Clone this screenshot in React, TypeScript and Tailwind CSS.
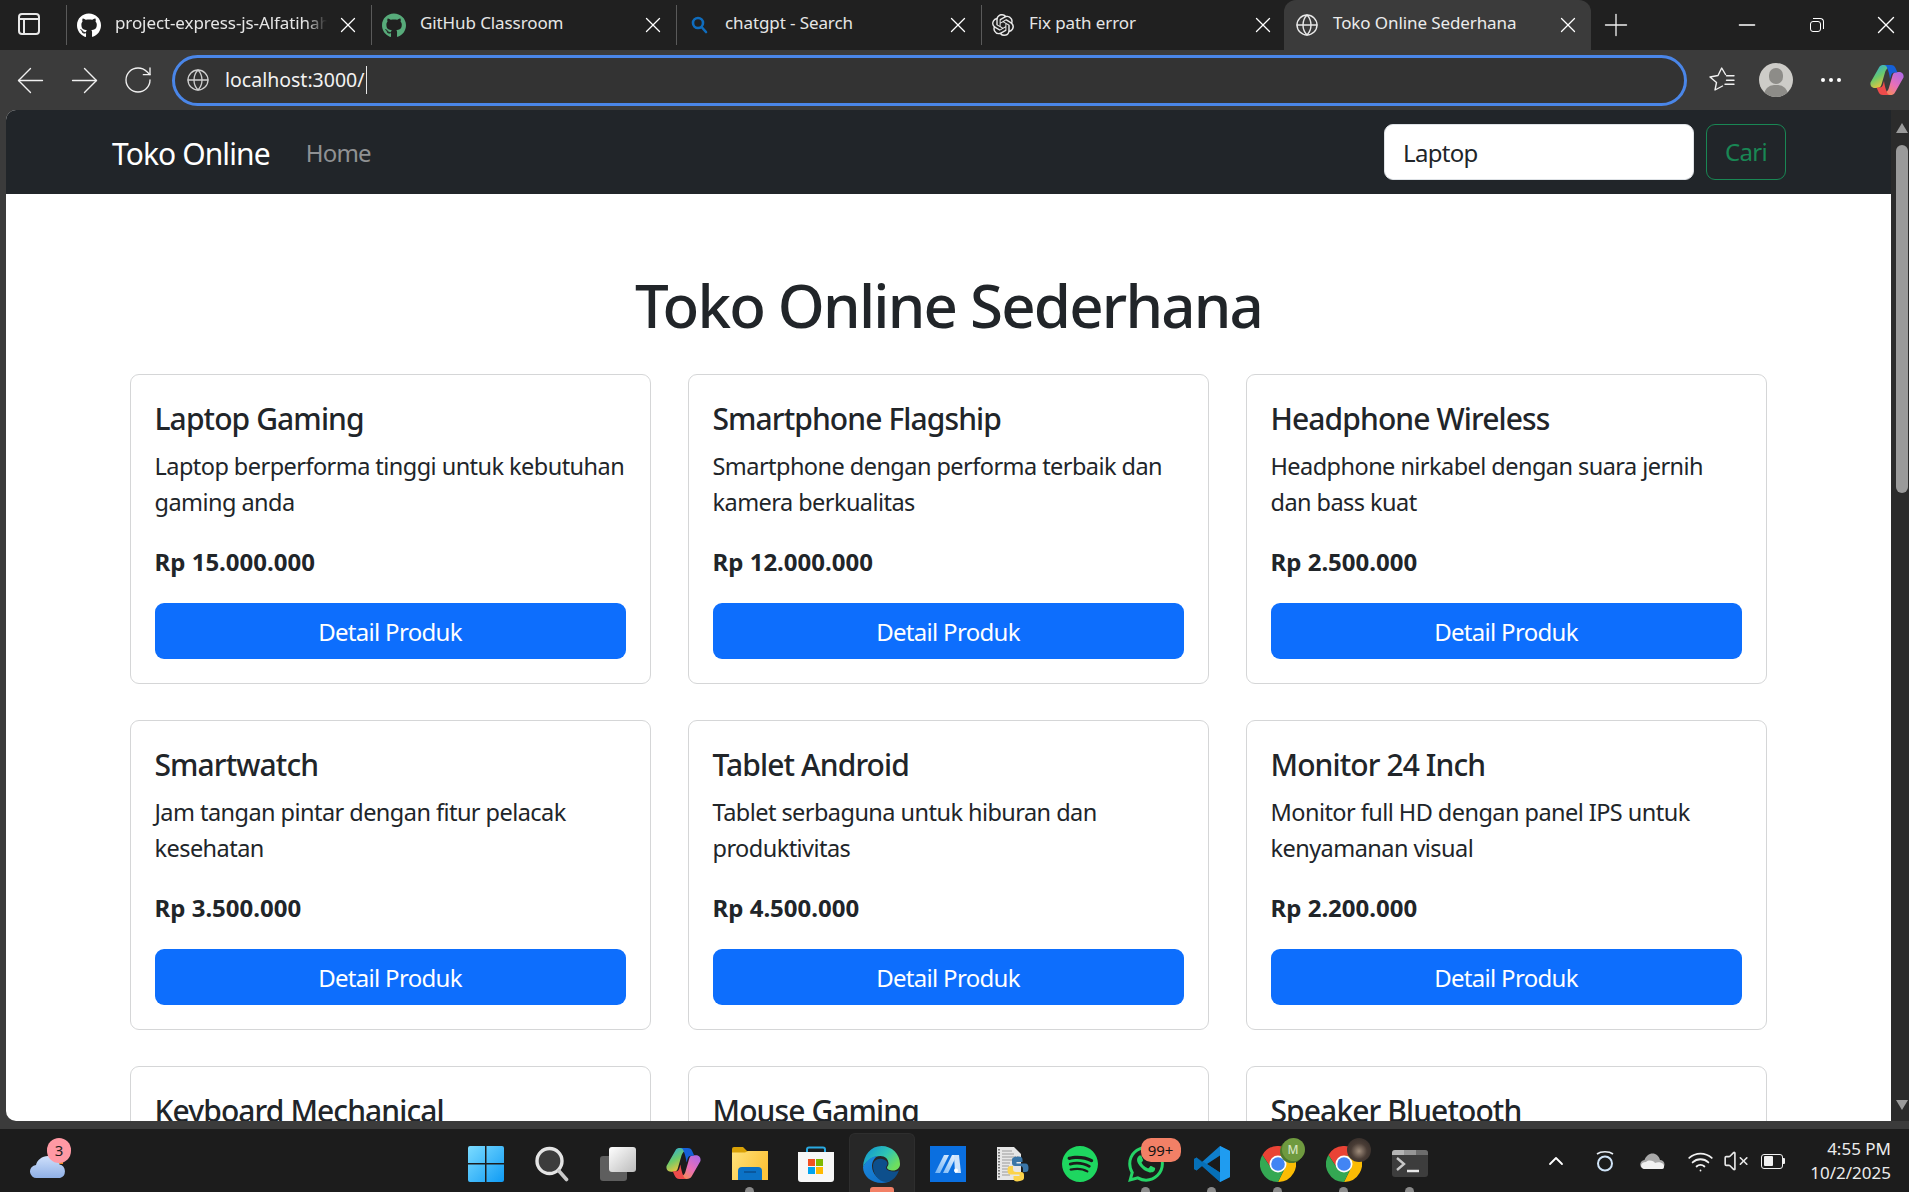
import { ArrowLeft, ArrowRight, ChevronUp, Globe, Minus, Plus, RotateCw, VolumeX, Wifi, X } from 'lucide-react';
import { FaGithub } from 'react-icons/fa';
import { SiOpenai, SiSpotify, SiWhatsapp } from 'react-icons/si';

const products = [
  { name: 'Laptop Gaming', desc: 'Laptop berperforma tinggi untuk kebutuhan gaming anda', price: 'Rp 15.000.000' },
  { name: 'Smartphone Flagship', desc: 'Smartphone dengan performa terbaik dan kamera berkualitas', price: 'Rp 12.000.000' },
  { name: 'Headphone Wireless', desc: 'Headphone nirkabel dengan suara jernih dan bass kuat', price: 'Rp 2.500.000' },
  { name: 'Smartwatch', desc: 'Jam tangan pintar dengan fitur pelacak kesehatan', price: 'Rp 3.500.000' },
  { name: 'Tablet Android', desc: 'Tablet serbaguna untuk hiburan dan produktivitas', price: 'Rp 4.500.000' },
  { name: 'Monitor 24 Inch', desc: 'Monitor full HD dengan panel IPS untuk kenyamanan visual', price: 'Rp 2.200.000' },
  { name: 'Keyboard Mechanical' },
  { name: 'Mouse Gaming' },
  { name: 'Speaker Bluetooth' },
];

function SearchTabIcon() {
  return (
    <svg width="24" height="24" viewBox="0 0 24 24" fill="none" stroke="#0f6cbd" strokeWidth="2.6" strokeLinecap="round">
      <circle cx="11" cy="10" r="5" />
      <path d="M15 14.5l4 4.5" />
    </svg>
  );
}

function TabClose() {
  return <X size={26} strokeWidth={1.2} className="shrink-0 text-white" />;
}

function Tab({ icon, title, fade }: { icon: React.ReactNode; title: string; fade?: boolean }) {
  return (
    <div className="flex h-[40px] w-[305px] shrink-0 items-center border-l border-[#5a5a5a] pl-[10px] pr-[10px]">
      <span className="flex w-[24px] shrink-0 items-center justify-center">{icon}</span>
      <span className={`mb-[4px] ml-[14px] flex-1 overflow-hidden whitespace-nowrap text-[17px] tracking-[-0.1px] text-[#e6e6e6] ${fade ? 'mr-[8px] [mask-image:linear-gradient(90deg,#000_90%,transparent_100%)]' : ''}`}>
        {title}
      </span>
      <TabClose />
    </div>
  );
}

function TabStrip() {
  return (
    <div className="flex h-[50px] shrink-0 items-center bg-[#202020]">
      <div className="flex w-[66px] shrink-0 justify-center pb-[2px] pr-[8px]">
        <div className="flex h-[22px] w-[22px] rounded-[4px] border-2 border-[#e8e8e8]">
          <div className="mt-[3px] w-[5px] border-r-2 border-t-2 border-[#e8e8e8]" />
          <div className="mt-[3px] flex-1 border-t-2 border-[#e8e8e8]" />
        </div>
      </div>
      <Tab icon={<FaGithub size={25} className="text-white" />} title="project-express-js-Alfatihah-Ramadhan" fade />
      <Tab icon={<FaGithub size={25} className="text-[#57ab7a]" />} title="GitHub Classroom" />
      <Tab icon={<SearchTabIcon />} title="chatgpt - Search" />
      <div className="flex h-[40px] w-[303px] shrink-0 items-center border-l border-[#5a5a5a] pl-[10px] pr-[8px]">
        <SiOpenai size={22} className="text-[#e8e8e8]" />
        <span className="mb-[4px] ml-[15px] flex-1 text-[17px] tracking-[-0.1px] text-[#e6e6e6]">Fix path error</span>
        <TabClose />
      </div>
      <div className="flex h-[50px] w-[307px] shrink-0 items-center rounded-t-[12px] bg-[#3b3b3b] pl-[11px] pr-[10px]">
        <Globe size={24} strokeWidth={1.4} className="text-[#e8e8e8]" />
        <span className="mb-[4px] ml-[14px] flex-1 text-[17px] tracking-[-0.1px] text-[#ececec]">Toko Online Sederhana</span>
        <TabClose />
      </div>
      <Plus size={36} strokeWidth={0.9} className="ml-[7px] text-[#eeeeee]" />
      <div className="ml-auto flex items-center">
        <div className="flex w-[70px] justify-center"><Minus size={26} strokeWidth={1.3} className="text-white" /></div>
        <div className="flex w-[70px] justify-center">
          <div className="relative h-[14px] w-[14px]">
            <div className="absolute bottom-0 left-0 h-[11px] w-[11px] rounded-[3px] border-[1.5px] border-white" />
            <div className="absolute right-0 top-0 h-[11px] w-[11px] rounded-tr-[4px] border-r-[1.5px] border-t-[1.5px] border-white" />
          </div>
        </div>
        <div className="flex w-[57px] justify-end pr-[8px]"><X size={30} strokeWidth={1.1} className="text-white" /></div>
      </div>
    </div>
  );
}

function FavoritesIcon() {
  return (
    <svg width="26" height="26" viewBox="0 0 26 26" fill="none" stroke="#f0f0f0" strokeWidth="1.4" strokeLinejoin="round" strokeLinecap="round">
      <path d="M16.500 7.500L12.700 1 9 8.500 1 10l6.500 5.500L6 23l7.500-4" />
      <path d="M17.500 8.700H25M17.500 13.300H25M16 17.300H25" />
    </svg>
  );
}

function Copilot({ size }: { size: number }) {
  return (
    <svg width={size} height={size} viewBox="0 0 34 34">
      <defs>
        <linearGradient id="copA" x1="0" y1="0" x2="0.5" y2="1">
          <stop offset="0" stopColor="#22a7ee" />
          <stop offset="0.55" stopColor="#6cc96a" />
          <stop offset="1" stopColor="#f5c33b" />
        </linearGradient>
        <linearGradient id="copB" x1="1" y1="0" x2="0.3" y2="1">
          <stop offset="0" stopColor="#a868ea" />
          <stop offset="0.6" stopColor="#e86fb8" />
          <stop offset="1" stopColor="#f58a5c" />
        </linearGradient>
      </defs>
      <path d="M9 4.500C10 2.500 11.500 2 14 2h7l-3 3c-1.500 1-2.500 2.500-3 4.500l-3.500 12c-.7 2.500-2 3.500-4.500 3.500H5c-3.500 0-5-2.500-4.500-5.500z" fill="url(#copA)" />
      <path d="M25 29.500c-1 2-2.500 2.500-5 2.500h-7l3-3c1.500-1 2.500-2.500 3-4.500l3.500-12c.7-2.500 2-3.500 4.500-3.500H29c3.500 0 5 2.500 4.500 5.500z" fill="url(#copB)" />
      <path d="M14 2h7c2.500 0 3.600 1 4.500 3l2 4.500h-3c-2 0-3 1-3.500 3l-1 3.500c-.5-4-1.500-8-3-11.500C16.500 3 15.500 2.300 14 2z" fill="#1560d8" />
      <path d="M20 32h-7c-2.500 0-3.600-1-4.500-3l-2-4.500h3c2 0 3-1 3.500-3l1-3.500c.5 4 1.500 8 3 11.500C17.500 31 18.500 31.700 20 32z" fill="#ee4b4b" />
    </svg>
  );
}

function AddressBar() {
  return (
    <div className="flex h-[60px] shrink-0 items-center bg-[#3b3b3b]">
      <div className="flex w-[172px] shrink-0 items-center pl-[3px]">
        <div className="flex w-[54px] justify-center"><ArrowLeft size={41} strokeWidth={0.8} className="shrink-0 text-[#f0f0f0]" /></div>
        <div className="flex w-[54px] justify-center"><ArrowRight size={41} strokeWidth={0.8} className="shrink-0 text-[#f0f0f0]" /></div>
        <div className="flex w-[54px] justify-center"><RotateCw size={32} strokeWidth={1} className="shrink-0 text-[#f0f0f0]" /></div>
      </div>
      <div className="flex h-[51px] w-[1515px] shrink-0 items-center rounded-full border-[3px] border-[#4a86e8] bg-[#333333] pl-[11px]">
        <Globe size={24} strokeWidth={1.3} className="text-[#cfcfcf]" />
        <span className="ml-[15px] text-[19.5px] text-[#f2f2f2]">localhost:3000/</span>
        <span className="ml-[2px] h-[28px] w-px bg-[#e8e8e8]" />
      </div>
      <div className="ml-[22px] flex items-center">
        <FavoritesIcon />
        <div className="relative ml-[24px] h-[34px] w-[34px] overflow-hidden rounded-full bg-[#cdccc8]">
          <div className="absolute left-[10px] top-[5px] h-[16px] w-[14px] rounded-full bg-[#8d8c88]" />
          <div className="absolute left-[5px] top-[22px] h-[20px] w-[24px] rounded-full bg-[#8d8c88]" />
        </div>
        <div className="ml-[28px] flex gap-[4px]">
          <span className="h-[4px] w-[4px] rounded-full bg-white" />
          <span className="h-[4px] w-[4px] rounded-full bg-white" />
          <span className="h-[4px] w-[4px] rounded-full bg-white" />
        </div>
        <div className="ml-[29px]"><Copilot size={34} /></div>
      </div>
    </div>
  );
}

function ProductCard({ name, desc, price }: { name: string; desc?: string; price?: string }) {
  return (
    <div className="h-[310px] rounded-[9px] border-[1.5px] border-[#d5d6d7] pl-[23.5px] pr-[24.5px] pt-[25.5px]">
      <h5 className="mb-[11px] text-[30px] font-medium leading-[36px] tracking-[-0.9px]">{name}</h5>
      {desc && <p className="mb-[24px] text-[23.5px] leading-[36px] tracking-[-0.55px]">{desc}</p>}
      {price && <p className="mb-[23px] text-[24px] font-bold leading-[36px]">{price}</p>}
      {price && <button className="h-[56px] w-full rounded-[9px] bg-[#0d6efd] pt-[2px] text-[24px] tracking-[-0.7px] text-white">Detail Produk</button>}
    </div>
  );
}

function Page() {
  return (
    <div className="flex min-h-0 flex-1 bg-[#3b3b3b] pl-[6px]">
      <div className="min-w-0 flex-1 overflow-hidden rounded-l-[10px] bg-white text-[#212529]">
        <nav className="flex h-[84px] items-center bg-[#212529] pl-[106px] pr-[105px]">
          <span className="mt-[2px] text-[30px] tracking-[-0.9px] text-white">Toko Online</span>
          <span className="ml-[36px] mt-[2px] text-[24px] tracking-[-0.8px] text-[#8f9193]">Home</span>
          <input
            readOnly
            value="Laptop"
            className="ml-auto h-[56px] w-[310px] rounded-[9px] border-[1.5px] border-[#dee2e6] bg-white px-[18px] text-[24px] tracking-[-0.7px] text-[#212529] outline-none"
          />
          <button className="ml-[12px] h-[56px] w-[80px] rounded-[9px] border-[1.5px] border-[#198754] text-[24px] tracking-[-0.7px] text-[#198754]">Cari</button>
        </nav>
        <div className="px-[124px] pt-[75px]">
          <h1 className="mb-[33px] text-center text-[60px] font-medium leading-[72px] tracking-[-1.8px]">Toko Online Sederhana</h1>
          <div className="grid grid-cols-3 gap-x-[37px] gap-y-[36px]">
            {products.map((p) => (
              <ProductCard key={p.name} {...p} />
            ))}
          </div>
        </div>
      </div>
      <div className="flex w-[18px] shrink-0 flex-col items-center bg-[#2b2b2b] pl-[3px] pt-[13px]">
        <div className="h-0 w-0 border-x-[6px] border-b-[10px] border-x-transparent border-b-[#9a9a9a]" />
        <div className="mt-[12px] h-[348px] w-[12px] rounded-full bg-[#9a9a9a]" />
        <div className="mb-[11px] mt-auto h-0 w-0 border-x-[6px] border-t-[10px] border-x-transparent border-t-[#9a9a9a]" />
      </div>
    </div>
  );
}

function WindowsLogo() {
  return (
    <svg width="36" height="36" viewBox="0 0 36 36">
      <defs>
        <linearGradient id="win" x1="0" y1="0" x2="1" y2="1">
          <stop offset="0" stopColor="#7cdcff" />
          <stop offset="1" stopColor="#0f9bf5" />
        </linearGradient>
      </defs>
      <path d="M0 2a2 2 0 0 1 2-2h15v17H0zM18.500 0H34a2 2 0 0 1 2 2v15H18.500zM0 18.500h17V36H2a2 2 0 0 1-2-2zM18.500 18.500H36V34a2 2 0 0 1-2 2H18.500z" fill="url(#win)" />
    </svg>
  );
}

function SearchLogo() {
  return (
    <svg width="34" height="36" viewBox="0 0 34 36" fill="none">
      <circle cx="14.500" cy="15" r="12.500" fill="#3c3c3c" stroke="#e4e4e4" strokeWidth="3.400" />
      <path d="M24 25l7.500 8.500" stroke="#c9c9c9" strokeWidth="3.600" strokeLinecap="round" />
    </svg>
  );
}

function TaskView() {
  return (
    <div className="relative h-[34px] w-[36px]">
      <div className="absolute bottom-0 left-0 h-[25px] w-[27px] rounded-[3px] bg-[#5e5e5e]" />
      <div className="absolute right-0 top-0 h-[25px] w-[27px] rounded-[3px] bg-gradient-to-br from-white to-[#bcbcbc]" />
    </div>
  );
}

function FolderLogo() {
  return (
    <svg width="36" height="33" viewBox="0 0 36 33">
      <defs>
        <linearGradient id="folder" x1="0" y1="0" x2="1" y2="0.4">
          <stop offset="0" stopColor="#ffe27a" />
          <stop offset="1" stopColor="#fcc43c" />
        </linearGradient>
      </defs>
      <path d="M0 2a2 2 0 0 1 2-2h9l4 4h19a2 2 0 0 1 2 2v4H0z" fill="#d9a106" />
      <path d="M0 5.500h13l3-1.500h20V33H0z" fill="url(#folder)" />
      <path d="M6 33v-9a4 4 0 0 1 4-4h16a4 4 0 0 1 4 4v9z" fill="#0b72c6" />
      <path d="M12 25h12" stroke="#0a4f8f" strokeWidth="1.500" />
    </svg>
  );
}

function StoreLogo() {
  return (
    <svg width="36" height="36" viewBox="0 0 36 36">
      <path d="M9 8V3.500a2 2 0 0 1 2-2h14a2 2 0 0 1 2 2V8" fill="none" stroke="#29a9e1" strokeWidth="2" />
      <path d="M0 6h36v27a3 3 0 0 1-3 3H3a3 3 0 0 1-3-3z" fill="#f7f7f7" />
      <rect x="10" y="13" width="7" height="7" fill="#f25022" />
      <rect x="18" y="13" width="7" height="7" fill="#7fba00" />
      <rect x="10" y="21" width="7" height="7" fill="#00a4ef" />
      <rect x="18" y="21" width="7" height="7" fill="#ffb900" />
    </svg>
  );
}

function EdgeLogo() {
  return (
    <svg width="37" height="37" viewBox="0 0 37 37">
      <defs>
        <linearGradient id="edgeTop" x1="0" y1="0" x2="1" y2="0.6">
          <stop offset="0" stopColor="#0c8fd6" />
          <stop offset="0.6" stopColor="#2fc5b4" />
          <stop offset="1" stopColor="#6ede5e" />
        </linearGradient>
        <linearGradient id="edgeLow" x1="0" y1="0" x2="1" y2="1">
          <stop offset="0" stopColor="#1b8ae0" />
          <stop offset="1" stopColor="#0f6ac0" />
        </linearGradient>
      </defs>
      <path d="M18.500 0C29 0 37 8 37 18c0 4-3 6.500-7 6.500-3 0-6-1-6-3 0-1 1.500-1.500 1.500-4C25.500 13 22 10 17.500 10 10 10 4 14 0 21 .5 9 8 0 18.500 0z" fill="url(#edgeTop)" />
      <path d="M0 21c3-6 8-11 15-11-4 2-6 6-6 10 0 8 7 15 15 15 2 0 3.500 0 5-1-3 2-6 3-10 3C8 37 0 30 0 21z" fill="url(#edgeLow)" />
      <path d="M10 20c0-5 4-8 9-7 3 .5 5.500 2.500 5.500 4.500 0 2-1.500 2.500-1.500 4 0 3 5 4 8 4 2 0 4-.5 5-1.500-1.500 5-6 12-13 12C15 36 10 27 10 20z" fill="#0d4f8c" />
    </svg>
  );
}

function MatLogo() {
  return (
    <svg width="36" height="36" viewBox="0 0 36 36">
      <defs>
        <linearGradient id="matBars" x1="0" y1="1" x2="1" y2="0">
          <stop offset="0" stopColor="#6fb2f5" />
          <stop offset="1" stopColor="#eef6ff" />
        </linearGradient>
      </defs>
      <rect width="36" height="36" fill="#0a6fe0" />
      <path d="M5 27L14 9h5L10 27zM13 27L22 9h5L18 27z" fill="url(#matBars)" />
      <path d="M24 9h5l2 18h-6z" fill="#cfe4fb" />
      <circle cx="26" cy="24.500" r="2" fill="#ffffff" />
    </svg>
  );
}

function PythonFile() {
  return (
    <svg width="35" height="36" viewBox="0 0 35 36">
      <path d="M1 1h17l7 7v26H1z" fill="#e6e6e6" />
      <path d="M3 3v30" stroke="#555555" strokeWidth="1.500" strokeDasharray="1.500 1.500" />
      <path d="M6 5h10M6 8h12M6 11h16M6 14h16M6 17h8M6 20h7M6 23h8M6 26h8M6 29h8" stroke="#9a9a9a" strokeWidth="1" />
      <path d="M20 11c4-1 6.500 0 6.500 2.500V16h-6v1.500h9c2 0 3 1.500 3 4.500s-1 4-3 4h-2.500v-3c0-2-1-3-3-3h-5c-2 0-3-1-3-3v-3.500c0-1.500 1.500-2.500 4-3z" fill="#3a76a8" />
      <path d="M24 35c-4 1-6.500 0-6.500-2.500V30h6v-1.500h-9c-2 0-3-1.500-3-4.500s1-4 3-4H17v3c0 2 1 3 3 3h5c2 0 3 1 3 3V32c0 1.500-1.500 2.500-4 3z" fill="#fcd34a" />
    </svg>
  );
}

function VsCodeLogo() {
  return (
    <svg width="36" height="36" viewBox="0 0 36 36">
      <path d="M26 0l10 5v26l-10 5L8 20 2.500 24.500 0 23v-10l2.500-1.500L8 16z" fill="#0f7ecb" />
      <path d="M26 0l10 5v26l-10 5z" fill="#1f9cf0" />
      <path d="M26 9.500L13 18l13 8.500z" fill="#1a1a1a" />
      <path d="M0 13l2.500-1.500L26 26.500V36L8 20 2.500 24.500 0 23z" fill="#0065a9" opacity="0.55" />
    </svg>
  );
}

function ChromeLogo() {
  const red = 'M33.600 9A18 18 0 0 0 2.400 9L11.100 22A8 8 0 0 1 18 10Z';
  return (
    <svg width="36" height="36" viewBox="0 0 36 36">
      <path d={red} fill="#ea4335" />
      <path d={red} fill="#fbbc04" transform="rotate(120 18 18)" />
      <path d={red} fill="#34a853" transform="rotate(240 18 18)" />
      <circle cx="18" cy="18" r="8.500" fill="#ffffff" />
      <circle cx="18" cy="18" r="6.800" fill="#4285f4" />
    </svg>
  );
}

function TerminalLogo() {
  return (
    <div className="h-[27px] w-[36px] overflow-hidden rounded-[3px] bg-[#3d3d3d]">
      <div className="flex h-[5px]">
        <div className="flex-1 bg-[#b5b5b5]" />
        <div className="flex-1 bg-[#969696]" />
        <div className="flex-1 bg-[#6d6d6d]" />
      </div>
      <svg width="36" height="22" viewBox="0 0 36 22" fill="none">
        <path d="M5 3l7 6-7 6" stroke="#c8c8c8" strokeWidth="2.400" />
        <path d="M15 16h12" stroke="#e8e8e8" strokeWidth="2.400" />
      </svg>
    </div>
  );
}

function TaskSlot({ children, running, active }: { children: React.ReactNode; running?: boolean; active?: boolean }) {
  return (
    <div className={`relative flex h-[59px] w-[66px] items-center justify-center pt-[2px] ${active ? 'rounded-t-[6px] border border-b-0 border-[#2e2e2e] bg-[#272727]' : ''}`}>
      {children}
      {running && <span className="absolute bottom-0 left-[28px] h-[5px] w-[9px] rounded-t-full bg-[#8a8a8a]" />}
      {active && <span className="absolute bottom-0 left-[20px] h-[5px] w-[24px] rounded-t-[3px] bg-[#f28066]" />}
    </div>
  );
}

function WeatherIcon() {
  return (
    <div className="relative h-[42px] w-[42px]">
      <span className="absolute left-[24px] top-[19px] h-[8px] w-[9px] bg-[#f08a24]" />
      <svg width="38" height="24" viewBox="0 0 38 24" className="absolute bottom-0 left-0">
        <defs>
          <linearGradient id="cloud" x1="0" y1="0" x2="0" y2="1">
            <stop offset="0" stopColor="#cfe0fb" />
            <stop offset="1" stopColor="#8fb0e6" />
          </linearGradient>
        </defs>
        <path d="M7 23a6.500 6.500 0 0 1-1-13C7 5 12 1 18 1s10 3 11.500 8.500A7 7 0 0 1 30 23z" fill="url(#cloud)" />
      </svg>
      <span className="absolute left-[17px] top-[1px] flex h-[25px] w-[24px] items-center justify-center rounded-full bg-[#ff99a4] text-[15px] text-[#1c1c1c]">3</span>
    </div>
  );
}

function BatteryIcon() {
  return (
    <div className="flex items-center">
      <div className="h-[15px] w-[22px] rounded-[3px] border-[1.5px] border-[#f0f0f0] p-[1.5px]">
        <div className="h-full w-[9px] rounded-[1px] bg-[#f0f0f0]" />
      </div>
      <div className="h-[6px] w-[2px] rounded-r-[1px] bg-[#f0f0f0]" />
    </div>
  );
}

function Taskbar() {
  return (
    <div className="flex h-[71px] shrink-0 flex-col">
      <div className="h-[8px] shrink-0 bg-[#3b3b3b]" />
      <div className="relative flex flex-1 items-end bg-[#1c1c1c]">
        <div className="absolute bottom-[13px] left-[30px]">
          <WeatherIcon />
        </div>
        <div className="mx-auto flex translate-x-[-7px] items-end">
          <TaskSlot><WindowsLogo /></TaskSlot>
          <TaskSlot><SearchLogo /></TaskSlot>
          <TaskSlot><TaskView /></TaskSlot>
          <TaskSlot><Copilot size={35} /></TaskSlot>
          <TaskSlot running><FolderLogo /></TaskSlot>
          <TaskSlot><StoreLogo /></TaskSlot>
          <TaskSlot active><EdgeLogo /></TaskSlot>
          <TaskSlot><MatLogo /></TaskSlot>
          <TaskSlot><PythonFile /></TaskSlot>
          <TaskSlot><SiSpotify size={36} className="text-[#1ed760]" /></TaskSlot>
          <TaskSlot running>
            <SiWhatsapp size={36} className="text-[#25d366]" />
            <span className="absolute left-[28px] top-[5px] flex h-[24px] w-[40px] items-center justify-center rounded-[10px] bg-[#f28066] text-[15px] text-[#141414]">99+</span>
          </TaskSlot>
          <TaskSlot running><VsCodeLogo /></TaskSlot>
          <TaskSlot running>
            <ChromeLogo />
            <span className="absolute left-[35px] top-[7px] h-[23px] w-[23px] rounded-full bg-[#4f7a2c]" />
            <span className="absolute left-[37px] top-[5px] flex h-[23px] w-[23px] items-center justify-center rounded-full bg-[#6f9a3f] text-[12px] font-medium text-[#d5e4c0]">M</span>
          </TaskSlot>
          <TaskSlot running>
            <ChromeLogo />
            <span className="absolute left-[36px] top-[5px] h-[24px] w-[24px] rounded-full bg-[radial-gradient(circle_at_50%_55%,#a08d7c_0%,#4a3d36_45%,#2b2523_100%)]" />
          </TaskSlot>
          <TaskSlot running><TerminalLogo /></TaskSlot>
        </div>
        <div className="absolute bottom-0 right-[18px] top-0 flex items-center pt-[1px]">
          <ChevronUp size={24} strokeWidth={1.8} className="text-white" />
          <svg width="20" height="22" viewBox="0 0 20 22" fill="none" className="ml-[27px]">
            <path d="M2 4c4-3 12-3 16 0" stroke="#e8eef5" strokeWidth="1.600" />
            <circle cx="10" cy="13.500" r="7" stroke="#cfe3f7" strokeWidth="2" />
          </svg>
          <svg width="25" height="17" viewBox="0 0 25 17" className="ml-[25px]">
            <path d="M5 16a4.500 4.500 0 0 1-.5-9C6 3 9 .5 12.500.5S19 3 20 7a4.500 4.500 0 0 1 0 9z" fill="#a8a8a8" />
            <path d="M4 16c-5-2-3-7 2-7 3-3 8-1 9 1 4-2 9 0 9 3s-1 3-3 3z" fill="#f0f0f0" />
          </svg>
          <Wifi size={27} strokeWidth={1.6} className="ml-[22px] text-[#f0f0f0]" />
          <VolumeX size={26} strokeWidth={1.5} className="ml-[9px] text-[#e8e8e8]" />
          <div className="ml-[12px]"><BatteryIcon /></div>
          <div className="ml-[25px] flex flex-col items-end text-[17px] leading-[24px] text-[#ececec]">
            <span>4:55 PM</span>
            <span>10/2/2025</span>
          </div>
        </div>
      </div>
    </div>
  );
}

export default function App() {
  return (
    <div className="flex h-[1192px] w-[1909px] flex-col overflow-hidden bg-[#3b3b3b] font-['Noto_Sans',sans-serif]">
      <TabStrip />
      <AddressBar />
      <Page />
      <Taskbar />
    </div>
  );
}
